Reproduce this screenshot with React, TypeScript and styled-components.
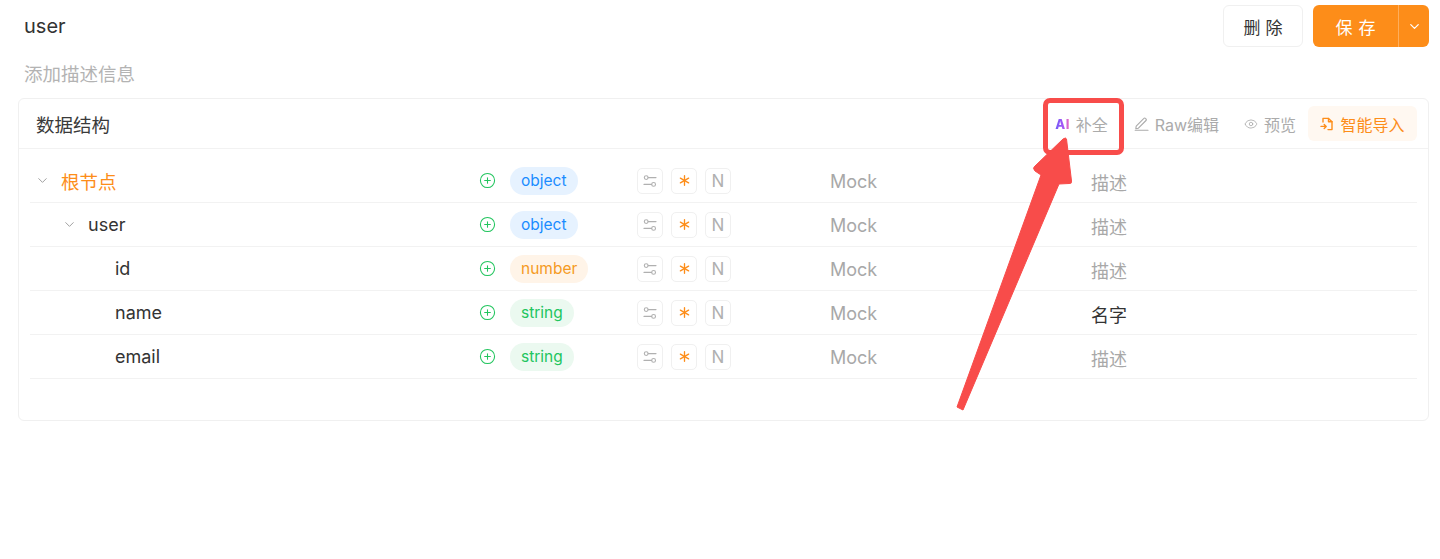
import React from "react";
import styled, { createGlobalStyle } from "styled-components";
import { Asterisk, ChevronDown, CirclePlus, Eye } from "lucide-react";

const Global = createGlobalStyle`
  html, body { margin: 0; padding: 0; background: #fff; }
  body { font-family: Inter, "Noto Sans CJK SC", sans-serif; color: #333; }
`;

const Page = styled.div`
  position: relative;
  box-sizing: border-box;
  width: 1440px;
  height: 559px;
  padding: 5px 11px 0 18px;
  overflow: hidden;
`;

const TopBar = styled.header`
  display: flex;
  align-items: center;
  justify-content: space-between;
  height: 42px;
  padding-left: 6px;
`;

const Title = styled.h1`
  margin: 0;
  font-size: 20px;
  font-weight: 400;
  color: #333;
`;

const TopActions = styled.div`
  display: flex;
  gap: 10px;
`;

const DeleteButton = styled.button`
  width: 80px;
  height: 42px;
  padding: 0;
  border: 1px solid #f0f0f0;
  border-radius: 6px;
  background: #fff;
  color: #333;
  font: 400 17px Inter, "Noto Sans CJK SC", sans-serif;
  letter-spacing: 5px;
  text-indent: 5px;
`;

const SaveGroup = styled.div`
  display: flex;
  width: 116px;
  height: 42px;
  border-radius: 6px;
  overflow: hidden;
  background: #fd8d19;
  color: #fff;
`;

const SaveMain = styled.div`
  width: 85px;
  display: flex;
  align-items: center;
  justify-content: center;
  border-right: 1px solid #feae5c;
  font-size: 17px;
  letter-spacing: 6px;
  text-indent: 6px;
`;

const SaveCaret = styled.div`
  flex: 1;
  display: flex;
  align-items: center;
  justify-content: center;
`;

const Description = styled.div`
  height: 51px;
  padding-left: 6px;
  display: flex;
  align-items: center;
  font-size: 18.5px;
  color: #b3b3b3;
`;

const Card = styled.section`
  box-sizing: border-box;
  height: 323px;
  border: 1px solid #f0f0f0;
  border-radius: 6px;
`;

const CardHeader = styled.div`
  box-sizing: border-box;
  height: 50px;
  padding: 0 11px 0 17px;
  display: flex;
  align-items: center;
  justify-content: space-between;
  border-bottom: 1px solid #f2f2f2;
`;

const CardTitle = styled.h2`
  margin: 0;
  font-size: 18.5px;
  font-weight: 400;
  color: #3a3a3a;
`;

const Tools = styled.div`
  display: flex;
  align-items: center;
`;

const Tool = styled.div<{ $gap?: number; $space?: number }>`
  display: flex;
  align-items: center;
  gap: ${(p) => p.$gap ?? 6}px;
  margin-right: ${(p) => p.$space ?? 0}px;
  font-size: 16px;
  color: #ababab;
`;

const AiMark = styled.span`
  font-size: 13px;
  font-weight: 800;
  letter-spacing: 0.3px;
  background: linear-gradient(90deg, #6d5cf6 0%, #a855f7 55%, #f472b6 100%);
  -webkit-background-clip: text;
  background-clip: text;
  color: transparent;
`;

const ImportButton = styled.div`
  width: 109px;
  height: 35px;
  display: flex;
  align-items: center;
  justify-content: center;
  gap: 6px;
  border-radius: 6px;
  background: #fff8f1;
  color: #fd8d19;
  font-size: 16px;
`;

const RowList = styled.div`
  padding: 10px 11px 0;
`;

const Row = styled.div`
  box-sizing: border-box;
  height: 44px;
  display: grid;
  grid-template-columns: 449px 31px 127px 193px 261px 1fr;
  align-items: center;
  border-bottom: 1px solid #f2f2f2;
`;

const NameCell = styled.div<{ $depth: number; $root?: boolean }>`
  display: flex;
  align-items: center;
  padding-left: ${(p) => 31 + p.$depth * 27}px;
  position: relative;
  font-size: ${(p) => (p.$root ? 18.5 : 18)}px;
  color: ${(p) => (p.$root ? "#fd8d19" : "#333")};
`;

const Caret = styled.span`
  position: absolute;
  display: flex;
  margin-left: -26px;
  color: #9a9a9a;
`;

const AddCell = styled.div`
  display: flex;
  color: #22c55e;
`;

const Tag = styled.span<{ $fg: string; $bg: string }>`
  justify-self: start;
  height: 28px;
  padding: 0 11px;
  display: inline-flex;
  align-items: center;
  border-radius: 14px;
  font-size: 15.5px;
  color: ${(p) => p.$fg};
  background: ${(p) => p.$bg};
`;

const Flags = styled.div`
  display: flex;
  gap: 8px;
`;

const Flag = styled.div`
  box-sizing: border-box;
  width: 26px;
  height: 26px;
  display: flex;
  align-items: center;
  justify-content: center;
  border: 1px solid #f0f0f0;
  border-radius: 5px;
  color: #b0b0b0;
  font-size: 17px;
`;

const MutedCell = styled.div`
  font-size: 18px;
  color: #a8a8a8;
  padding-top: 2px;
`;

const DescCell = styled(MutedCell)<{ $filled?: boolean }>`
  color: ${(p) => (p.$filled ? "#333" : "#a8a8a8")};
`;

const Highlight = styled.div`
  position: absolute;
  left: 1043px;
  top: 98px;
  box-sizing: border-box;
  width: 81px;
  height: 57px;
  border: 5px solid #f84c4a;
  border-radius: 7px;
`;

const ArrowLayer = styled.svg`
  position: absolute;
  left: 0;
  top: 0;
  pointer-events: none;
`;

const SliderIcon = () => (
  <svg width="16" height="16" viewBox="0 0 16 16" fill="none" stroke="currentColor" strokeWidth="1.1" strokeLinecap="round">
    <circle cx="4.2" cy="4.6" r="1.9" />
    <path d="M6.2 4.6H14" />
    <circle cx="11.6" cy="11.4" r="1.9" />
    <path d="M2 11.4H9.6" />
  </svg>
);

const PenIcon = () => (
  <svg width="15" height="15" viewBox="0 0 15 15" fill="none" stroke="currentColor" strokeWidth="1.1" strokeLinecap="round" strokeLinejoin="round">
    <path d="M2.2 10.2 9.9 2.4a1 1 0 0 1 1.5 0l.6.6a1 1 0 0 1 0 1.5L4.4 12.2l-2.6.4z" />
    <path d="M1.2 14.2H14" />
  </svg>
);

const ImportIcon = () => (
  <svg width="14" height="14" viewBox="0 0 14 14" fill="none" stroke="currentColor" strokeWidth="1.4" strokeLinecap="round" strokeLinejoin="round">
    <path d="M3 5V1.4H8.5L12 4.8V12.6H8" />
    <path d="M8.5 1.4V4.8H12" />
    <path d="M1 9.4H6M4.2 7.4 6.2 9.4 4.2 11.4" />
  </svg>
);

type Item = {
  name: string;
  depth: number;
  type: "object" | "number" | "string";
  desc?: string;
  root?: boolean;
  open?: boolean;
};

const items: Item[] = [
  { name: "根节点", depth: 0, type: "object", root: true, open: true },
  { name: "user", depth: 1, type: "object", open: true },
  { name: "id", depth: 2, type: "number" },
  { name: "name", depth: 2, type: "string", desc: "名字" },
  { name: "email", depth: 2, type: "string" },
];

const tagColors = {
  object: { fg: "#1a8cff", bg: "#e6f2ff" },
  number: { fg: "#f59a23", bg: "#fff4e8" },
  string: { fg: "#22c55e", bg: "#ebf9f0" },
};

export default function App() {
  return (
    <Page>
      <Global />
      <TopBar>
        <Title>user</Title>
        <TopActions>
          <DeleteButton>删除</DeleteButton>
          <SaveGroup>
            <SaveMain>保存</SaveMain>
            <SaveCaret>
              <ChevronDown size={15} strokeWidth={2} />
            </SaveCaret>
          </SaveGroup>
        </TopActions>
      </TopBar>
      <Description>添加描述信息</Description>
      <Card>
        <CardHeader>
          <CardTitle>数据结构</CardTitle>
          <Tools>
            <Tool $space={26}>
              <AiMark>AI</AiMark>
              补全
            </Tool>
            <Tool $space={25}>
              <PenIcon />
              Raw编辑
            </Tool>
            <Tool $space={12}>
              <Eye size={14} strokeWidth={1.4} />
              预览
            </Tool>
            <ImportButton>
              <ImportIcon />
              智能导入
            </ImportButton>
          </Tools>
        </CardHeader>
        <RowList>
          {items.map((item) => (
            <Row key={item.name}>
              <NameCell $depth={item.depth} $root={item.root}>
                {item.open && (
                  <Caret>
                    <ChevronDown size={15} strokeWidth={1.5} />
                  </Caret>
                )}
                {item.name}
              </NameCell>
              <AddCell>
                <CirclePlus size={17} strokeWidth={1.5} />
              </AddCell>
              <Tag $fg={tagColors[item.type].fg} $bg={tagColors[item.type].bg}>
                {item.type}
              </Tag>
              <Flags>
                <Flag>
                  <SliderIcon />
                </Flag>
                <Flag>
                  <Asterisk size={19} strokeWidth={1.7} color="#fd8d19" />
                </Flag>
                <Flag>N</Flag>
              </Flags>
              <MutedCell>Mock</MutedCell>
              <DescCell $filled={!!item.desc}>{item.desc ?? "描述"}</DescCell>
            </Row>
          ))}
        </RowList>
      </Card>
      <Highlight />
      <ArrowLayer width="1440" height="559" viewBox="0 0 1440 559">
        <path
          d="M1066.5 139 L1071.5 181 Q1072 184 1069 183.5 L1059 184 L963 410 L957 407 L1041 175 L1035 171 Q1032 168 1035 166 L1063 139 Q1066 137 1066.5 139 Z"
          fill="#f84c4a"
          stroke="#f84c4a"
          strokeLinejoin="round"
        />
      </ArrowLayer>
    </Page>
  );
}
